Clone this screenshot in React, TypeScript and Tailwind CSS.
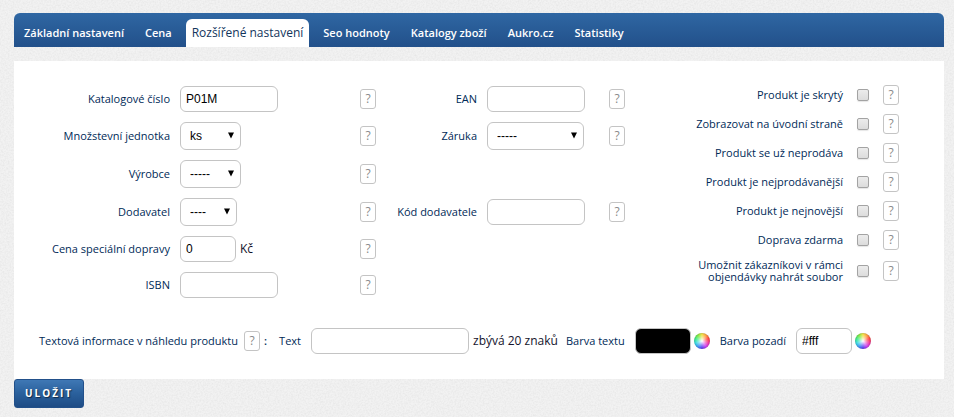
import React, { useState } from 'react';
import clsx from 'clsx';

const tabs = [
  'Základní nastavení',
  'Cena',
  'Rozšířené nastavení',
  'Seo hodnoty',
  'Katalogy zboží',
  'Aukro.cz',
  'Statistiky',
];

const flags = [
  { id: 'hidden', label: 'Produkt je skrytý' },
  { id: 'homepage', label: 'Zobrazovat na úvodní straně' },
  { id: 'discontinued', label: 'Produkt se už neprodáva' },
  { id: 'bestseller', label: 'Produkt je nejprodávanější' },
  { id: 'newest', label: 'Produkt je nejnovější' },
  { id: 'free-shipping', label: 'Doprava zdarma' },
  { id: 'upload', label: 'Umožnit zákazníkovi v rámci objendávky nahrát soubor' },
];

const fieldClass =
  "h-[26px] shrink-0 rounded-md border border-[#c4c4c4] px-[5px] font-['Liberation_Sans',sans-serif] text-xs text-black outline-none focus:border-[#2d639f]";

const Help: React.FC = () => (
  <button
    type="button"
    aria-label="Nápověda"
    className="flex h-5 w-4 shrink-0 items-center justify-center rounded-[3px] border border-[#c4c4c4] bg-white text-xs text-[#8a8a8a]"
  >
    ?
  </button>
);

interface LabelProps {
  htmlFor: string;
  children: React.ReactNode;
  className?: string;
}

const Label: React.FC<LabelProps> = ({ htmlFor, children, className }) => (
  <label htmlFor={htmlFor} className={clsx('text-right text-[11px] leading-3 text-[#002a57]', className)}>
    {children}
  </label>
);

interface SelectProps {
  id: string;
  option: string;
  className: string;
}

const Select: React.FC<SelectProps> = ({ id, option, className }) => (
  <div className={clsx('relative', className)}>
    <select
      id={id}
      className="h-7 w-full appearance-none rounded-md border border-[#c4c4c4] bg-white pl-[9px] font-['Liberation_Sans',sans-serif] text-xs text-black outline-none"
    >
      <option>{option}</option>
    </select>
    <svg viewBox="0 0 6 7" className="pointer-events-none absolute top-2.5 right-[7px] h-[7px] w-1.5">
      <path d="M0 0.5H6L3 6.5Z" fill="#000" />
    </svg>
  </div>
);

const ColorWheel: React.FC<{ label: string }> = ({ label }) => (
  <button
    type="button"
    aria-label={label}
    className="ml-[3px] h-4 w-4 shrink-0 rounded-full bg-[radial-gradient(circle,#ffffffee_5%,#ffffff66_35%,transparent_62%),conic-gradient(#f0e040,#ff9a3a,#ff3a3a,#f030a0,#c83af0,#5a3af0,#3a90f5,#30d8e0,#38e888,#7be83a,#f0e040)] shadow-[inset_0_0_1px_#555]"
  />
);

// Fine paper grain behind the whole page
const Grain: React.FC = () => (
  <svg aria-hidden="true" className="pointer-events-none absolute inset-0 h-full w-full">
    <filter id="grain">
      <feTurbulence type="fractalNoise" baseFrequency="0.6" numOctaves="3" />
      <feColorMatrix type="matrix" values="0 0 0 0 0.45  0 0 0 0 0.45  0 0 0 0 0.45  0.3 0 0 0 -0.1" />
    </filter>
    <rect width="100%" height="100%" filter="url(#grain)" />
  </svg>
);

const App: React.FC = () => {
  const [active, setActive] = useState('Rozšířené nastavení');

  return (
    <div className="relative min-h-screen bg-[#f2f2f2] pt-[13px] pr-2.5 pb-2 pl-3.5 font-['Open_Sans',sans-serif] text-[11px] text-[#002a57]">
      <Grain />
      <div className="relative">
        <nav className="flex h-[34px] items-end gap-[7px] rounded-t-md bg-linear-to-b from-[#2f67a3] to-[#22508a] pl-[3px]">
          {tabs.map((tab) => (
            <button
              key={tab}
              type="button"
              onClick={() => setActive(tab)}
              className={clsx(
                'h-7 rounded-t-md whitespace-nowrap',
                tab === active ? 'bg-white px-1.5 text-xs text-[#12355c]' : 'px-[7px] text-[11px] font-semibold text-white'
              )}
            >
              {tab}
            </button>
          ))}
        </nav>

        <form onSubmit={(e) => e.preventDefault()}>
          <div className="mt-3.5 bg-white pt-6 pb-[25px]">
            <div className="flex items-start justify-between pr-[45px]">
              {/* Text fields, two label/field/help groups per row */}
              <div className="grid grid-cols-[156px_170px_16px_91px_112px_16px] items-center gap-2.5 pt-px">
                <Label htmlFor="catalog-no">Katalogové číslo</Label>
                <input id="catalog-no" defaultValue="P01M" className={clsx(fieldClass, 'w-[98px]')} />
                <Help />
                <Label htmlFor="ean">EAN</Label>
                <input id="ean" className={clsx(fieldClass, 'w-[98px]')} />
                <Help />

                <Label htmlFor="unit">Množstevní jednotka</Label>
                <Select id="unit" option="ks" className="w-[61px]" />
                <Help />
                <Label htmlFor="warranty">Záruka</Label>
                <Select id="warranty" option="-----" className="w-[97px]" />
                <Help />

                <Label htmlFor="maker">Výrobce</Label>
                <Select id="maker" option="-----" className="w-[61px]" />
                <Help />

                <Label htmlFor="supplier" className="col-start-1">Dodavatel</Label>
                <Select id="supplier" option="----" className="w-[57px]" />
                <Help />
                <Label htmlFor="supplier-code">Kód dodavatele</Label>
                <input id="supplier-code" className={clsx(fieldClass, 'w-[98px]')} />
                <Help />

                <Label htmlFor="shipping">Cena speciální dopravy</Label>
                <div className="flex items-center gap-1 text-xs text-[#14142c]">
                  <input id="shipping" defaultValue="0" className={clsx(fieldClass, 'w-14')} />
                  <span>Kč</span>
                </div>
                <Help />

                <Label htmlFor="isbn" className="col-start-1">ISBN</Label>
                <input id="isbn" className={clsx(fieldClass, 'w-[98px]')} />
                <Help />
              </div>

              <div className="flex flex-col gap-[9px]">
                {flags.map((flag) => (
                  <div key={flag.id} className="flex items-center justify-end gap-3.5">
                    <Label htmlFor={flag.id} className="max-w-[154px]">{flag.label}</Label>
                    <input
                      id={flag.id}
                      type="checkbox"
                      className="h-3 w-3 appearance-none rounded-[2px] border border-[#a3a3a3] bg-linear-to-b from-[#ececec] to-[#dcdcdc] shadow-[0_1px_1px_#0000001a] checked:bg-[#2d639f]"
                    />
                    <Help />
                  </div>
                ))}
              </div>
            </div>

            {/* Text badge shown over the product preview */}
            <div className="mt-[30px] flex items-center pl-[25px] whitespace-nowrap">
              <span className="w-[205px]">Textová informace v náhledu produktu</span>
              <Help />
              <span className="w-[18px] pl-1 font-semibold">:</span>
              <Label htmlFor="badge-text" className="mr-2.5 w-[23px]">Text</Label>
              <input id="badge-text" maxLength={20} className={clsx(fieldClass, 'w-[158px]')} />
              <span className="w-[97px] pl-1 text-xs text-[#14142c]">zbývá 20 znaků</span>
              <Label htmlFor="text-color" className="mr-2.5">Barva textu</Label>
              <input id="text-color" defaultValue="#000" className={clsx(fieldClass, 'w-14 bg-black')} />
              <ColorWheel label="Vybrat barvu textu" />
              <Label htmlFor="bg-color" className="mx-2.5">Barva pozadí</Label>
              <input id="bg-color" defaultValue="#fff" className={clsx(fieldClass, 'w-14')} />
              <ColorWheel label="Vybrat barvu pozadí" />
            </div>
          </div>

          <button
            type="submit"
            className="h-[29px] rounded-[3px] border border-[#22508a] bg-linear-to-b from-[#3f78b5] via-[#2a609c] to-[#1e4c85] px-2.5 text-[10px] font-bold tracking-[2px] text-white uppercase text-shadow-[1px_1px_1px_#00000088]"
          >
            Uložit
          </button>
        </form>
      </div>
    </div>
  );
};

export default App;
